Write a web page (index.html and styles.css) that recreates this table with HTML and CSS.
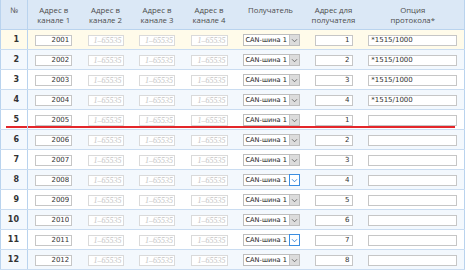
FILE: index.html
```html
<!DOCTYPE html>
<html lang="ru">
<head>
<meta charset="utf-8">
<title>Каналы</title>
<link rel="stylesheet" href="styles.css">
</head>
<body>
<table class="grid">
  <colgroup>
    <col class="c-num"><col class="c-a1"><col class="c-a2"><col class="c-a3"><col class="c-a4"><col class="c-rcv"><col class="c-ra"><col class="c-opt">
  </colgroup>
  <thead>
    <tr>
      <th class="num-h">№</th>
      <th>Адрес в<br>канале 1</th>
      <th>Адрес в<br>канале 2</th>
      <th>Адрес в<br>канале 3</th>
      <th>Адрес в<br>канале 4</th>
      <th>Получатель</th>
      <th>Адрес для<br>получателя</th>
      <th>Опция<br>протокола*</th>
    </tr>
  </thead>
  <tbody id="rows"></tbody>
</table>
<script src="app.js"></script>
</body>
</html>
```

FILE: app.js
```js
(function () {
  var tbody = document.getElementById('rows');
  var html = '';
  for (var i = 1; i <= 12; i++) {
    var opt = i <= 4 ? '*1515/1000' : '';
    var ra = i <= 4 ? i : (i === 5 ? 1 : i - 4);
    var active = (i === 8 || i === 11) ? ' sel-active' : '';
    var cls = i === 1 ? 'row-first' : (i % 2 === 0 ? 'row-alt' : 'row');
    if (i === 5) cls += ' row-split';
    html += '<tr class="' + cls + '">' +
      '<td class="num">' + i + '</td>' +
      '<td><input class="inp w37 r" value="' + (2000 + i) + '"></td>' +
      '<td><input class="inp w36 ph" placeholder="1–65535"></td>' +
      '<td><input class="inp w36 ph" placeholder="1–65535"></td>' +
      '<td><input class="inp w37 ph" placeholder="1–65535"></td>' +
      '<td><div class="sel' + active + '"><span class="sel-text">CAN-шина 1</span><span class="sel-btn"><svg viewBox="0 0 8 6" width="7" height="5"><path d="M1 1.5 L4 4.5 L7 1.5" fill="none" stroke="currentColor" stroke-width="1.1"/></svg></span></div></td>' +
      '<td><input class="inp w38 r" value="' + ra + '"></td>' +
      '<td class="opt"><input class="inp w89" value="' + opt + '"></td>' +
      '</tr>';
  }
  tbody.innerHTML = html;
})();
```

FILE: styles.css
```css
html, body {
  margin: 0;
  padding: 0;
  background: #ffffff;
}
body {
  font-family: "DejaVu Sans", Verdana, sans-serif;
  color: #333;
}
.grid {
  border-collapse: collapse;
  table-layout: fixed;
  width: 464px;
  border-left: 1px solid #b9d3ee;
  border-right: 1px solid #b9d3ee;
}
.c-num { width: 27px; }
.c-a1 { width: 52px; }
.c-a2 { width: 52px; }
.c-a3 { width: 51px; }
.c-a4 { width: 53px; }
.c-rcv { width: 70px; }
.c-ra { width: 56px; }
.c-opt { width: 103px; }

.grid th {
  height: 29px;
  box-sizing: border-box;
  padding: 5px 0 0;
  vertical-align: top;
  background: #dbe8f6;
  font-family: "Open Sans", "Liberation Sans", sans-serif;
  font-weight: normal;
  font-size: 7.8px;
  line-height: 10px;
  color: #4d4d4d;
  text-align: center;
  border-bottom: 1px solid #b9d3ee;
}
.grid th.num-h {
  border-right: 1px solid #b9d3ee;
}
.grid td {
  height: 20px;
  box-sizing: border-box;
  padding: 0;
  text-align: center;
  vertical-align: middle;
  border-bottom: 1px solid #c9dcf1;
}
.grid td.num {
  text-align: right;
  padding-right: 8px;
  font-weight: bold;
  font-size: 8px;
  color: #333;
  border-right: 1px solid #b9d3ee;
}
.row-first td { background: #fffbea; }
.row td { background: #ffffff; }
.row-alt td { background: #f3f8fd; }

.row-split td {
  background-image: linear-gradient(#e3262a, #e3262a);
  background-repeat: no-repeat;
  background-size: 100% 2px;
  background-position: left bottom 1px;
}
.row-split td.num {
  background-size: calc(100% - 5px) 2px;
  background-position: right bottom 1px;
}
.row-split td.opt {
  background-size: calc(100% - 9px) 2px;
  background-position: left bottom 1px;
}

.inp {
  box-sizing: border-box;
  height: 11px;
  margin: 0;
  padding: 0 2px;
  border: 1px solid #c6c6c6;
  background: #fff;
  font-family: "DejaVu Sans", sans-serif;
  font-size: 7px;
  line-height: 9px;
  color: #333;
  vertical-align: middle;
  display: inline-block;
}
.inp.r { text-align: right; }
.inp.ph {
  border-color: #dadada;
  text-align: right;
  padding: 0 1px;
  font-family: "Liberation Serif", serif;
  font-size: 8px;
}
.inp.ph::placeholder {
  color: #c4c4c4;
  font-style: italic;
  font-family: "Liberation Serif", serif;
  font-size: 8px;
  opacity: 1;
}
.w36 { width: 36px; }
.w37 { width: 37px; }
.w38 { width: 38px; }
.w89 { width: 89px; }

.sel {
  display: inline-flex;
  align-items: stretch;
  box-sizing: border-box;
  width: 57px;
  height: 12px;
  border: 1px solid #bdbdbd;
  background: #fff;
  vertical-align: middle;
  margin-left: 1px;
}
.sel-text {
  flex: 1;
  min-width: 0;
  font-family: "DejaVu Sans", sans-serif;
  font-size: 6.6px;
  line-height: 10px;
  color: #222;
  text-align: left;
  padding-left: 2px;
  white-space: nowrap;
  overflow: hidden;
}
.sel-btn {
  flex: 0 0 9px;
  display: flex;
  align-items: center;
  justify-content: center;
  background: #dcdcdc;
  border-left: 1px solid #c4c4c4;
  color: #666;
}
.sel-active .sel-btn {
  background: #fff;
  border: 1px solid #3c8ee0;
  margin: -1px -1px -1px 0;
  color: #2f7fd6;
}
```
